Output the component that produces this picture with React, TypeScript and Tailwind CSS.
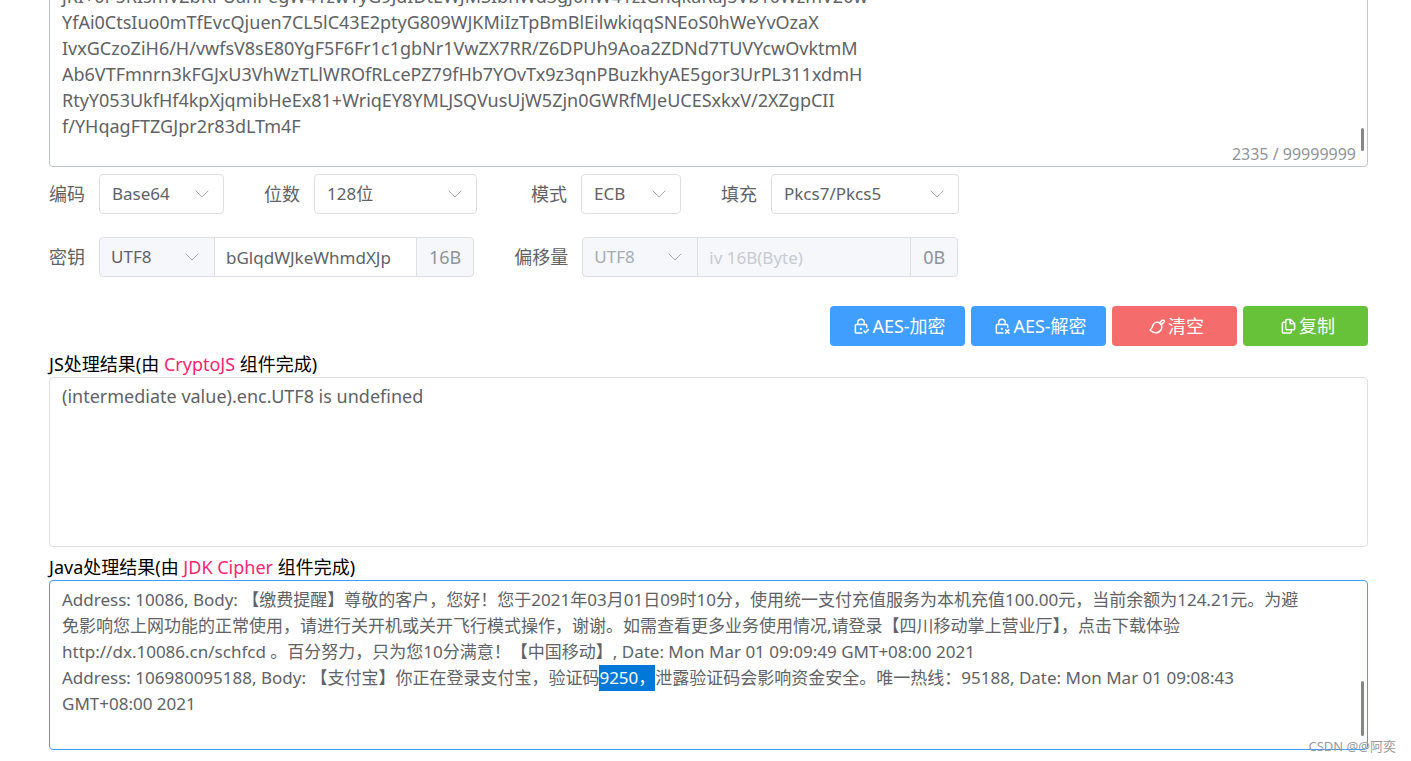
import { useEffect, useRef } from 'react';
import type { ReactNode } from 'react';
import clsx from 'clsx';

const CIPHER_TEXT = [
  'jRI+0P5RIsmVZbRPUanPegW41zwTyG9JdIDtEWJMSIbhWd3gJ0nW41zIGhqkaRaj5Vb10WzmV20w',
  'YfAi0CtsIuo0mTfEvcQjuen7CL5lC43E2ptyG809WJKMiIzTpBmBlEilwkiqqSNEoS0hWeYvOzaX',
  'IvxGCzoZiH6/H/vwfsV8sE80YgF5F6Fr1c1gbNr1VwZX7RR/Z6DPUh9Aoa2ZDNd7TUVYcwOvktmM',
  'Ab6VTFmnrn3kFGJxU3VhWzTLlWROfRLcePZ79fHb7YOvTx9z3qnPBuzkhyAE5gor3UrPL311xdmH',
  'RtyY053UkfHf4kpXjqmibHeEx81+WriqEY8YMLJSQVusUjW5Zjn0GWRfMJeUCESxkxV/2XZgpCII',
  'f/YHqagFTZGJpr2r83dLTm4F',
].join('\n');

const JAVA_RESULT = [
  'Address: 10086, Body: 【缴费提醒】尊敬的客户，您好！您于2021年03月01日09时10分，使用统一支付充值服务为本机充值100.00元，当前余额为124.21元。为避',
  '免影响您上网功能的正常使用，请进行关开机或关开飞行模式操作，谢谢。如需查看更多业务使用情况,请登录【四川移动掌上营业厅】，点击下载体验',
  'http://dx.10086.cn/schfcd 。百分努力，只为您10分满意！【中国移动】, Date: Mon Mar 01 09:09:49 GMT+08:00 2021',
  'Address: 106980095188, Body: 【支付宝】你正在登录支付宝，验证码9250，泄露验证码会影响资金安全。唯一热线：95188, Date: Mon Mar 01 09:08:43',
  'GMT+08:00 2021',
].join('\n');

const HIGHLIGHT = '9250，';

const TEXTAREA =
  'block w-full resize-none overflow-hidden whitespace-pre rounded border bg-white px-3 leading-[26px] text-[#606266] outline-none';

function Chevron({ className }: { className?: string }) {
  return (
    <svg
      className={clsx('pointer-events-none absolute top-1/2 h-4 w-4 -translate-y-1/2 text-[#a8abb2]', className)}
      fill="none"
      viewBox="0 0 16 16"
      stroke="currentColor"
      aria-hidden="true"
    >
      <path strokeLinecap="round" strokeLinejoin="round" d="M2 5l6 6 6-6" />
    </svg>
  );
}

type FieldProps = {
  id: string;
  label: string;
  className?: string;
  children: ReactNode;
};

function Field({ id, label, className, children }: FieldProps) {
  return (
    <div className={clsx('flex items-center gap-[14px]', className)}>
      <label htmlFor={id} className="whitespace-nowrap text-lg text-[#606266]">
        {label}
      </label>
      {children}
    </div>
  );
}

function Select({ id, options, className }: { id: string; options: string[]; className: string }) {
  return (
    <div className={clsx('relative h-10', className)}>
      <select
        id={id}
        className="h-full w-full appearance-none rounded border border-[#dcdfe6] bg-white pl-3 pr-8 text-[17px] text-[#606266] outline-none"
      >
        {options.map(option => (
          <option key={option}>{option}</option>
        ))}
      </select>
      <Chevron className="right-[14px]" />
    </div>
  );
}

type KeyInputProps = {
  id: string;
  value?: string;
  placeholder?: string;
  size: string;
  inputClass: string;
  disabled?: boolean;
};

function KeyInput({ id, value, placeholder, size, inputClass, disabled }: KeyInputProps) {
  return (
    <div className="flex h-10 overflow-hidden rounded border border-[#dcdfe6] bg-[#f5f7fa]">
      <div className="relative w-[115px] border-r border-[#dcdfe6]">
        <select
          aria-label="charset"
          disabled={disabled}
          className="h-full w-full appearance-none bg-transparent pl-[11px] pr-8 text-[17px] text-[#606266] outline-none disabled:text-[#a8abb2] disabled:opacity-100"
        >
          <option>UTF8</option>
          <option>Hex</option>
          <option>Base64</option>
        </select>
        <Chevron className="right-[14px]" />
      </div>
      <input
        id={id}
        type="text"
        defaultValue={value}
        placeholder={placeholder}
        disabled={disabled}
        className={clsx(
          'h-full px-[11px] text-[17px] text-[#606266] outline-none placeholder:text-[#c8cad0]',
          disabled ? 'bg-[#f5f7fa]' : 'bg-white',
          inputClass,
        )}
      />
      <span className="flex items-center border-l border-[#dcdfe6] px-3 text-lg text-[#909399]">{size}</span>
    </div>
  );
}

function Icon({ children }: { children: ReactNode }) {
  return (
    <svg
      className="h-[17px] w-[17px]"
      viewBox="0 0 18 18"
      fill="none"
      stroke="currentColor"
      strokeWidth={1.6}
      strokeLinecap="round"
      strokeLinejoin="round"
      aria-hidden="true"
    >
      {children}
    </svg>
  );
}

function LockBase() {
  return (
    <>
      <path d="M9.500 16H3.500a1 1 0 0 1-1-1V8a1 1 0 0 1 1-1h10a1 1 0 0 1 1 1v2" />
      <path d="M5 7V4.800a3.500 3.500 0 0 1 7 0V7" />
      <circle cx="8.3" cy="11.5" r="1.2" fill="currentColor" stroke="none" />
    </>
  );
}

function ActionButton({ className, icon, children }: { className: string; icon: ReactNode; children: ReactNode }) {
  return (
    <button
      type="button"
      className={clsx('flex h-10 items-center justify-center gap-[2px] rounded pl-1 text-lg text-white', className)}
    >
      <Icon>{icon}</Icon>
      <span>{children}</span>
    </button>
  );
}

function ResultLabel({ htmlFor, prefix, name }: { htmlFor: string; prefix: string; name: string }) {
  return (
    <label htmlFor={htmlFor} className="block text-lg leading-[26px] text-black">
      {prefix}处理结果(由 <span className="text-[#f52672]">{name}</span> 组件完成)
    </label>
  );
}

export default function App() {
  const javaRef = useRef<HTMLTextAreaElement>(null);

  useEffect(() => {
    const el = javaRef.current;
    if (!el) return;
    const start = el.value.indexOf(HIGHLIGHT);
    el.focus({ preventScroll: true });
    el.setSelectionRange(start, start + HIGHLIGHT.length);
  }, []);

  return (
    <main className="relative overflow-hidden bg-white pb-[11px] pl-[49px] pr-[43px] font-['Noto_Sans','Noto_Sans_CJK_SC',sans-serif]">
      <div className="relative -mt-[22px]">
        <textarea
          aria-label="密文"
          defaultValue={CIPHER_TEXT}
          spellCheck={false}
          className={clsx(TEXTAREA, 'h-[189px] border-[#c0c4cc] py-1 text-lg')}
        />
        <span className="absolute bottom-1 right-3 text-base leading-[18px] text-[#909399]">2335 / 99999999</span>
        <span className="absolute bottom-4 right-1 h-[23px] w-[3px] rounded-full bg-[#868686]" />
      </div>

      <div className="mt-[7px] flex">
        <Field id="encoding" label="编码">
          <Select id="encoding" className="w-[125px]" options={['Base64', 'Hex']} />
        </Field>
        <Field id="bits" label="位数" className="ml-10">
          <Select id="bits" className="w-[163px]" options={['128位', '192位', '256位']} />
        </Field>
        <Field id="mode" label="模式" className="ml-[54px]">
          <Select id="mode" className="w-[100px]" options={['ECB', 'CBC', 'CTR']} />
        </Field>
        <Field id="padding" label="填充" className="ml-10">
          <Select id="padding" className="w-[188px]" options={['Pkcs7/Pkcs5', 'ZeroPadding', 'NoPadding']} />
        </Field>
      </div>

      <div className="mt-[23px] flex">
        <Field id="key" label="密钥">
          <KeyInput id="key" value="bGlqdWJkeWhmdXJp" size="16B" inputClass="w-[201px]" />
        </Field>
        <Field id="iv" label="偏移量" className="ml-10">
          <KeyInput id="iv" placeholder="iv 16B(Byte)" size="0B" inputClass="w-[212px]" disabled />
        </Field>
      </div>

      <div className="mt-[29px] flex justify-end gap-[6px]">
        <ActionButton
          className="w-[135px] bg-[#409eff]"
          icon={
            <>
              <LockBase />
              <path d="M11.5 13.8l1.7 1.7 3-3.2" />
            </>
          }
        >
          AES-加密
        </ActionButton>
        <ActionButton
          className="w-[135px] bg-[#409eff]"
          icon={
            <>
              <LockBase />
              <path d="M12.4 12.6l3.4 3.4M15.8 12.6l-3.4 3.4" />
            </>
          }
        >
          AES-解密
        </ActionButton>
        <ActionButton
          className="w-[125px] bg-[#f56c6c]"
          icon={
            <>
              <path d="M11.3 5.2C8.6 3.6 5.4 4.6 4.3 7.5 3.7 9.4 2.8 11.4 1.2 13c2.6 2.2 6.5 3.4 9.3 1.8 2.7-1.6 3.8-4.9 2.5-7.8" />
              <path d="M11.3 5.2l2.4-2.6a1.4 1.4 0 0 1 2.1 1.9L13 7z" />
            </>
          }
        >
          清空
        </ActionButton>
        <ActionButton
          className="w-[125px] bg-[#67c23a]"
          icon={
            <>
              <path d="M11.2 1.5H7.5A1.5 1.5 0 0 0 6 3v8a1.5 1.5 0 0 0 1.5 1.5H14a1.5 1.5 0 0 0 1.5-1.5V5.8z" />
              <path d="M10.8 2v4.2H15" />
              <path d="M6 4.5H4A1.5 1.5 0 0 0 2.5 6v8.5A1.5 1.5 0 0 0 4 16h6.5a1.5 1.5 0 0 0 1.5-1.5v-2" />
            </>
          }
        >
          复制
        </ActionButton>
      </div>

      <div className="mt-[5px]">
        <ResultLabel htmlFor="js-result" prefix="JS" name="CryptoJS" />
        <textarea
          id="js-result"
          defaultValue="(intermediate value).enc.UTF8 is undefined"
          spellCheck={false}
          className={clsx(TEXTAREA, 'h-[170px] border-[#dcdfe6] py-[5px] text-lg')}
        />
      </div>

      <div className="mt-[7px]">
        <ResultLabel htmlFor="java-result" prefix="Java" name="JDK Cipher" />
        <div className="relative">
          <textarea
            id="java-result"
            ref={javaRef}
            defaultValue={JAVA_RESULT}
            spellCheck={false}
            className={clsx(
              TEXTAREA,
              'h-[170px] border-[#409eff] py-[6px] text-[17px] selection:bg-[#0078d7] selection:text-white',
            )}
          />
          <span className="absolute bottom-[14px] right-1 h-[55px] w-[3px] rounded-full bg-[#868686]" />
        </div>
      </div>

      <span className="absolute bottom-[6px] right-[15px] text-[13px] leading-[18px] text-[#999]">CSDN @@阿奕</span>
    </main>
  );
}
